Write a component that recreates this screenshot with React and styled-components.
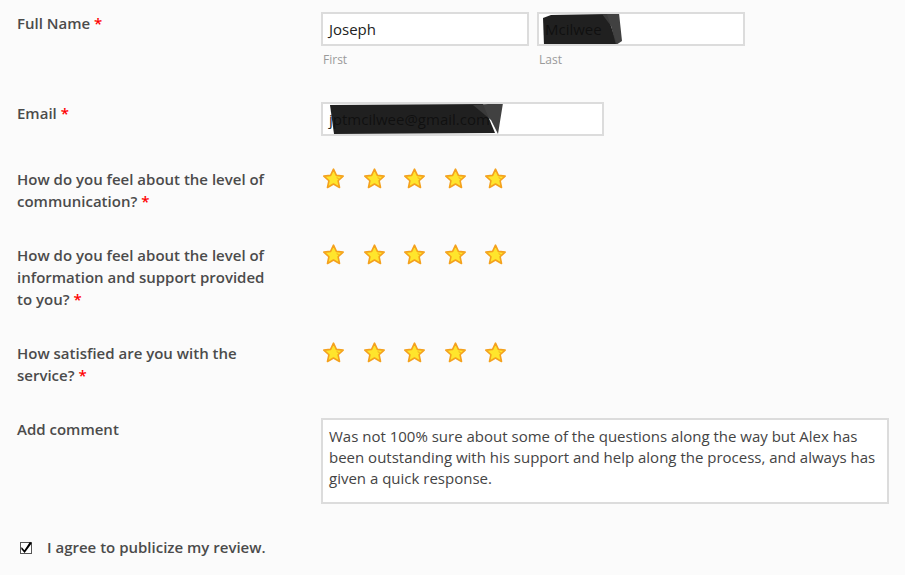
import React from 'react';
import styled, { createGlobalStyle } from 'styled-components';

const GlobalStyle = createGlobalStyle`
  html, body {
    margin: 0;
    padding: 0;
    background: #fbfbfb;
  }
  body {
    font-family: 'Open Sans', 'Liberation Sans', sans-serif;
    color: #444;
  }
  * {
    box-sizing: border-box;
  }
`;

function Star() {
  return (
    <StarIcon viewBox="2.2 1.8 19.6 19" aria-hidden="true">
      <path
        d="M12 2.6 L14.7 8.4 L21 9.1 L16.3 13.4 L17.6 19.7 L12 16.5 L6.4 19.7 L7.7 13.4 L3 9.1 L9.3 8.4 Z"
        fill="#ffe52c"
        stroke="#f4a11d"
        strokeWidth="1.5"
        strokeLinejoin="round"
      />
      <path
        d="M15.2 10.6 Q16.6 11 16.9 12.1"
        fill="none"
        stroke="#f4b21d"
        strokeWidth="1"
        strokeLinecap="round"
      />
    </StarIcon>
  );
}

function Rating({ count = 5 }) {
  return (
    <Stars>
      {Array.from({ length: count }).map((_, i) => (
        <Star key={i} />
      ))}
    </Stars>
  );
}

function Required() {
  return <Asterisk>*</Asterisk>;
}

// marker scribble laid over the personal details
function Redaction({ width, black, grey }) {
  return (
    <RedactMark width={width} height="30" viewBox={`0 0 ${width} 30`} aria-hidden="true">
      <polygon points={black} fill="#0f0f0f" fillOpacity="0.93" />
      <polygon points={grey} fill="#3b3b3b" fillOpacity="0.97" />
    </RedactMark>
  );
}

function App() {
  return (
    <>
      <GlobalStyle />
      <Form>
        <Row>
          <Label>
            Full Name <Required />
          </Label>
          <NameFields>
            <SubField>
              <TextBox $width={208}>Joseph</TextBox>
              <SubLabel>First</SubLabel>
            </SubField>
            <SubField>
              <TextBox $width={208}>
                Mcilwee
                <Redaction
                  width={90}
                  black="12,1 68,0 78,30 5,31 4,4"
                  grey="63,0 80,-1 83,27 77,31 72,12"
                />
              </TextBox>
              <SubLabel>Last</SubLabel>
            </SubField>
          </NameFields>
        </Row>

        <Row>
          <Label>
            Email <Required />
          </Label>
          <div>
            <TextBox $width={283}>
              jptmcilwee@gmail.com
              <Redaction
                width={185}
                black="7,1 160,0 172,29 11,30"
                grey="150,1 180,-1 175,30 168,16"
              />
            </TextBox>
          </div>
        </Row>

        <Row>
          <Label>
            How do you feel about the level of communication? <Required />
          </Label>
          <Rating />
        </Row>

        <Row>
          <Label>
            How do you feel about the level of information and support
            provided to you? <Required />
          </Label>
          <Rating />
        </Row>

        <Row>
          <Label>
            How satisfied are you with the service? <Required />
          </Label>
          <Rating />
        </Row>

        <Row>
          <Label>Add comment</Label>
          <Comment>
            Was not 100% sure about some of the questions along the way but
            Alex has been outstanding with his support and help along the
            process, and always has given a quick response.
          </Comment>
        </Row>

        <Agree>
          <CheckBox viewBox="0 0 12 13" aria-hidden="true">
            <rect x="0.5" y="1.5" width="11" height="11" fill="#fff" stroke="#555" />
            <path d="M1.6 6 L4.4 9.2 L10 0.8 L11.6 2.4 L4.6 11.9 L1.2 8 Z" fill="#000" />
          </CheckBox>
          I agree to publicize my review.
        </Agree>
      </Form>
    </>
  );
}

const Form = styled.form`
  padding: 12px 16px 0 17px;
`;

const Row = styled.div`
  display: grid;
  grid-template-columns: 304px 1fr;
  align-items: start;
  margin-bottom: 32px;
`;

const Label = styled.div`
  max-width: 258px;
  font-size: 15px;
  font-weight: 600;
  line-height: 22px;
  color: #4b4b4b;
`;

const Asterisk = styled.span`
  color: #f00;
`;

const NameFields = styled.div`
  display: flex;
  gap: 8px;
`;

const SubField = styled.div`
  display: flex;
  flex-direction: column;
`;

const TextBox = styled.div`
  position: relative;
  width: ${(p) => p.$width}px;
  height: 34px;
  padding: 0 6px;
  border: 2px solid #dcdcdc;
  background: #fff;
  font-size: 15px;
  line-height: 30px;
  color: #222;
  white-space: nowrap;
  overflow: hidden;
`;

const RedactMark = styled.svg`
  position: absolute;
  top: 0;
  left: 0;
  overflow: visible;
`;

const SubLabel = styled.span`
  margin-top: 3px;
  padding-left: 2px;
  font-size: 12px;
  line-height: 21px;
  color: #9a9a9a;
`;

const Stars = styled.div`
  display: flex;
  gap: 19.5px;
  padding-left: 2px;
`;

const StarIcon = styled.svg`
  width: 21px;
  height: 21px;
  display: block;
`;

const Comment = styled.div`
  width: 568px;
  height: 86px;
  padding: 6px 6px;
  border: 2px solid #dcdcdc;
  background: #fff;
  font-size: 15px;
  line-height: 21px;
  color: #444;
`;

const Agree = styled.label`
  display: flex;
  align-items: center;
  gap: 15px;
  padding-left: 3px;
  font-size: 15px;
  font-weight: 600;
  line-height: 22px;
  color: #4b4b4b;
`;

const CheckBox = styled.svg`
  width: 12px;
  height: 13px;
  display: block;
`;

export default App;
